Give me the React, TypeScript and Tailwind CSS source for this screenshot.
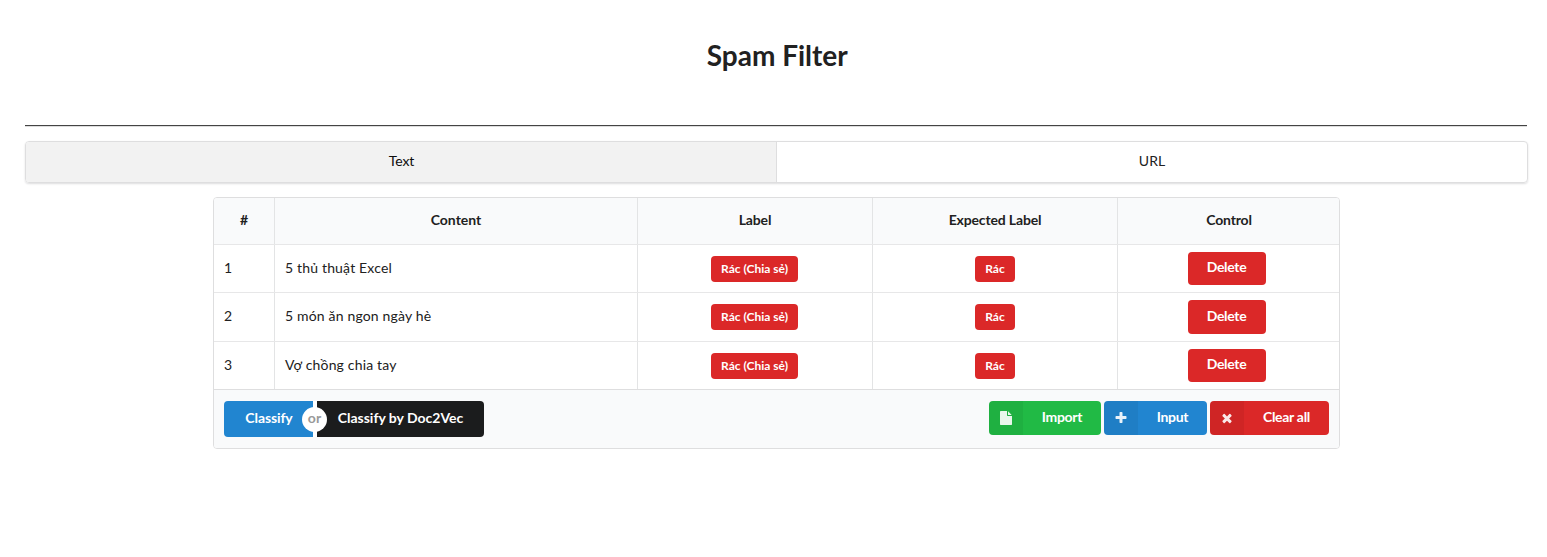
import type { ReactNode } from "react";

const FILE =
  "M1152 512v-472q22 14 36 28l408 408q14 14 28 36h-472zm-128 32q0 40 28 68t68 28h544v1056q0 40-28 68t-68 28h-1344q-40 0-68-28t-28-68v-1600q0-40 28-68t68-28h800v544z";
const PLUS =
  "M1600 736v192q0 40-28 68t-68 28h-416v416q0 40-28 68t-68 28h-192q-40 0-68-28t-28-68v-416h-416q-40 0-68-28t-28-68v-192q0-40 28-68t68-28h416v-416q0-40 28-68t68-28h192q40 0 68 28t28 68v416h416q40 0 68 28t28 68z";
const REMOVE =
  "M1490 1322q0 40-28 68l-136 136q-28 28-68 28t-68-28l-294-294-294 294q-28 28-68 28t-68-28l-136-136q-28-28-28-68t28-68l294-294-294-294q-28-28-28-68t28-68l136-136q28-28 68-28t68 28l294 294 294-294q28-28 68-28t68 28l136 136q28 28 28 68t-28 68l-294 294 294 294q28 28 28 68z";

const ROWS = [
  { content: "5 thủ thuật Excel", height: "h-[48px]", button: "h-[33px] pb-[3px]" },
  { content: "5 món ăn ngon ngày hè", height: "h-[49px]", button: "h-[34px] pb-[2px]" },
  { content: "Vợ chồng chia tay", height: "h-[48px]", button: "h-[33px] pb-[3px]" },
];

const COLUMNS = "grid grid-cols-[60px_363px_235px_245px_222px]";
const CELL = "border-l border-[#e3e4e5]";

function Tag({ children, width }: { children: ReactNode; width: string }) {
  return (
    <span
      className={`mt-[11px] flex h-[26px] items-center justify-center rounded-[4px] bg-[#db2828] text-[12px] leading-[12px] font-bold text-white ${width}`}
    >
      {children}
    </span>
  );
}

function IconButton(props: { icon: string; label: string; color: string; width: string }) {
  return (
    <button className={`flex h-[34px] overflow-hidden rounded-[4px] text-white ${props.color} ${props.width}`}>
      <span className="flex h-full w-[34px] shrink-0 items-center justify-center bg-black/5 pb-px">
        <svg className="h-[14px] w-[14px] opacity-90" viewBox="0 0 1792 1792" fill="currentColor">
          <path d={props.icon} />
        </svg>
      </span>
      <span className="flex h-full flex-1 items-center justify-center pb-[2px] font-bold tracking-[-0.3px]">
        {props.label}
      </span>
    </button>
  );
}

export default function App() {
  return (
    <div className="h-[557px] bg-white px-[25px] pt-[37px] font-[Lato,'Noto_Sans',sans-serif] text-[14px] leading-[18px] text-[#212121]">
      <h1 className="pl-[7.5px] text-center text-[28px] leading-[36px] font-bold">Spam Filter</h1>
      <hr className="mt-[52px] w-[1502px] border-t border-b border-t-[#444444] border-b-[#dddddd]" />

      <nav className="mt-[14px] flex h-[42px] w-[1503px] rounded-[4px] border border-[#dededf] shadow-[0_1px_2px_0_rgba(34,36,38,0.15)]">
        <a className="flex w-[751px] items-center justify-center rounded-l-[3px] border-r border-[#dededf] bg-[#f2f2f2] pb-[2px] pl-px tracking-[-0.1px] text-[#0d0d0d]">
          Text
        </a>
        <a className="flex flex-1 items-center justify-center pb-[2px]">URL</a>
      </nav>

      <section className="mt-[14px] ml-[188px] w-[1127px] overflow-hidden rounded-[4px] border border-[#dededf]">
        <div className={`${COLUMNS} h-[46px] bg-[#f9fafb] text-center leading-[44px] font-bold tracking-[-0.15px]`}>
          <div>#</div>
          <div className={`${CELL} tracking-normal`}>Content</div>
          <div className={CELL}>Label</div>
          <div className={CELL}>Expected Label</div>
          <div className={`${CELL} pl-px`}>Control</div>
        </div>

        {ROWS.map((row, index) => (
          <div key={row.content} className={`${COLUMNS} ${row.height} border-t border-[#e7e7e8]`}>
            <div className="pt-[14px] pl-[10px]">{index + 1}</div>
            <div className={`${CELL} pt-[14px] pl-[10px] tracking-[0.17px]`}>{row.content}</div>
            <div className={`${CELL} flex items-start justify-center pr-[1px]`}>
              <Tag width="w-[87px]">Rác (Chia sẻ)</Tag>
            </div>
            <div className={`${CELL} flex items-start justify-center`}>
              <Tag width="w-[40px]">Rác</Tag>
            </div>
            <div className={`${CELL} flex items-start justify-center pr-[4px]`}>
              <button
                className={`${row.button} mt-[7px] flex w-[78px] items-center justify-center rounded-[4px] bg-[#db2828] font-bold tracking-[-0.3px] text-white`}
              >
                Delete
              </button>
            </div>
          </div>
        ))}

        <div className="flex h-[59px] items-start justify-between border-t border-[#dededf] bg-[#f9fafb] px-[10px] pt-[11px]">
          <div className="relative flex h-[36px] font-bold text-white">
            <button className="flex w-[89px] items-center justify-center rounded-l-[4px] bg-[#2185d0] pb-[2px] pl-px tracking-[-0.1px]">
              Classify
            </button>
            <span className="w-[4px] bg-white" />
            <button className="flex w-[167px] items-center justify-center rounded-r-[4px] bg-[#1b1c1d] pb-[2px]">
              Classify by Doc2Vec
            </button>
            <span className="absolute top-[6px] left-[78px] flex h-[25px] w-[25px] items-center justify-center rounded-full bg-white pb-[3px] text-[#999999]">
              or
            </span>
          </div>
          <div className="flex gap-[3px]">
            <IconButton icon={FILE} label="Import" color="bg-[#21ba45]" width="w-[112px]" />
            <IconButton icon={PLUS} label="Input" color="bg-[#2185d0]" width="w-[103px]" />
            <IconButton icon={REMOVE} label="Clear all" color="bg-[#db2828]" width="w-[119px]" />
          </div>
        </div>
      </section>
    </div>
  );
}
